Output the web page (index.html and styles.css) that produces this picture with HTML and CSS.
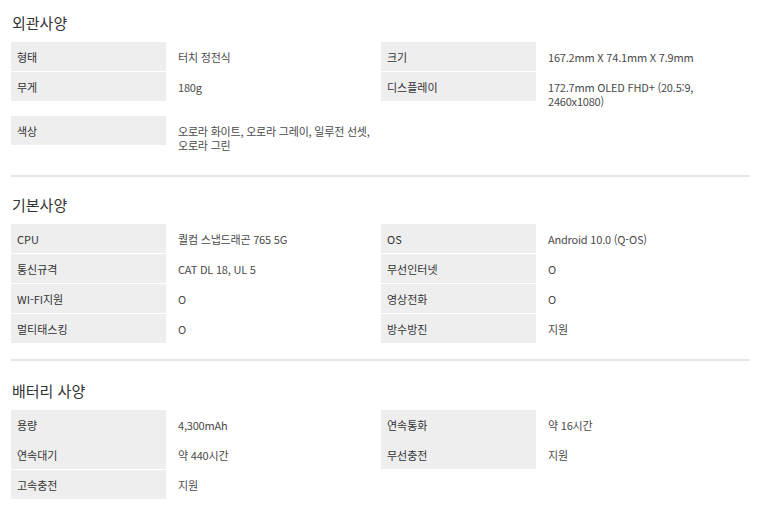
FILE: index.html
```html
<!DOCTYPE html>
<html lang="ko">
<head>
<meta charset="utf-8">
<link rel="stylesheet" href="styles.css">
</head>
<body>
<div class="spec">
  <section class="sec">
    <h3 class="sec-title">외관사양</h3>
    <div class="grid">
      <dl class="item"><dt>형태</dt><dd>터치 정전식</dd></dl>
      <dl class="item"><dt>크기</dt><dd>167.2mm X 74.1mm X 7.9mm</dd></dl>
      <dl class="item"><dt>무게</dt><dd>180g</dd></dl>
      <dl class="item"><dt>디스플레이</dt><dd>172.7mm OLED FHD+ (20.5:9,<br>2460x1080)</dd></dl>
      <dl class="item"><dt>색상</dt><dd>오로라 화이트, 오로라 그레이, 일루전 선셋,<br>오로라 그린</dd></dl>
    </div>
  </section>
  <section class="sec">
    <h3 class="sec-title">기본사양</h3>
    <div class="grid">
      <dl class="item"><dt>CPU</dt><dd>퀄컴 스냅드래곤 765 5G</dd></dl>
      <dl class="item"><dt>OS</dt><dd>Android 10.0 (Q-OS)</dd></dl>
      <dl class="item"><dt>통신규격</dt><dd>CAT DL 18, UL 5</dd></dl>
      <dl class="item"><dt>무선인터넷</dt><dd>O</dd></dl>
      <dl class="item"><dt>WI-FI지원</dt><dd>O</dd></dl>
      <dl class="item"><dt>영상전화</dt><dd>O</dd></dl>
      <dl class="item"><dt>멀티태스킹</dt><dd>O</dd></dl>
      <dl class="item"><dt>방수방진</dt><dd>지원</dd></dl>
    </div>
  </section>
  <section class="sec sec-last">
    <h3 class="sec-title">배터리 사양</h3>
    <div class="grid">
      <dl class="item item-joined"><dt>용량</dt><dd>4,300mAh</dd></dl>
      <dl class="item item-joined"><dt>연속통화</dt><dd>약 16시간</dd></dl>
      <dl class="item"><dt>연속대기</dt><dd>약 440시간</dd></dl>
      <dl class="item"><dt>무선충전</dt><dd>지원</dd></dl>
      <dl class="item"><dt>고속충전</dt><dd>지원</dd></dl>
    </div>
  </section>
</div>
</body>
</html>
```

FILE: styles.css
```css
html, body {
  margin: 0;
  padding: 0;
  background: #fff;
}

body {
  font-family: "Noto Sans CJK KR", "Noto Sans", sans-serif;
  color: #333;
}

.spec {
  width: 739px;
  margin-left: 11px;
}

.sec {
  padding-top: 13px;
  padding-bottom: 15px;
  border-bottom: 2px solid #e6e6e6;
}

.sec + .sec {
  padding-top: 18px;
}

.sec + .sec-last {
  padding-top: 20px;
  border-bottom: none;
}

.sec-title {
  margin: 0 0 9px 1px;
  font-size: 15px;
  line-height: 20px;
  font-weight: 400;
  color: #333;
}

.grid {
  display: grid;
  grid-template-columns: 370px 369px;
  align-items: start;
}

.item {
  display: flex;
  margin: 0;
  align-items: flex-start;
}

.item dt {
  width: 155px;
  height: 30px;
  padding: 8px 0 0 6px;
  box-sizing: border-box;
  background: #eeeeee;
  border-bottom: 1px solid #fff;
  font-size: 11px;
  line-height: 14px;
  color: #333;
  flex: none;
}

.item-joined dt {
  border-bottom-color: #eeeeee;
}

.item dd {
  margin: 0;
  padding: 8px 0 8px 12px;
  font-size: 11px;
  line-height: 14px;
  letter-spacing: -0.2px;
  white-space: nowrap;
  color: #4a4a4a;
  flex: 1;
}
```
